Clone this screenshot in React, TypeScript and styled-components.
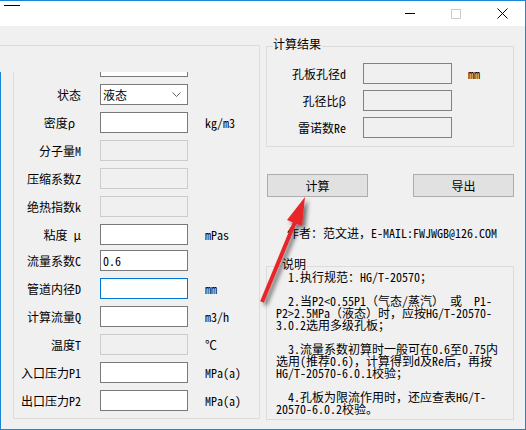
import React from 'react';
import styled, { createGlobalStyle } from 'styled-components';

const GlobalStyle = createGlobalStyle`
  html, body {
    margin: 0;
    padding: 0;
    background: #ffffff;
  }
  body {
    font-family: "Noto Sans Mono CJK SC", "Noto Sans CJK SC", monospace;
    font-size: 12px;
    color: #000;
  }
  * {
    box-sizing: border-box;
  }
`;

const FIELDS = [
  { label: '密度ρ ', kind: 'edit', unit: 'kg/m3' },
  { label: '分子量M', kind: 'disabled' },
  { label: '压缩系数Z', kind: 'disabled' },
  { label: '绝热指数k', kind: 'disabled' },
  { label: '粘度 μ', kind: 'edit', unit: 'mPas' },
  { label: '流量系数C', kind: 'edit', value: '0.6', pull: true },
  { label: '管道内径D', kind: 'focus', unit: 'mm' },
  { label: '计算流量Q', kind: 'edit', unit: 'm3/h' },
  { label: '温度T', kind: 'disabled', unit: '℃' },
  { label: '入口压力P1', kind: 'edit', unit: 'MPa(a)' },
  { label: '出口压力P2', kind: 'edit', unit: 'MPa(a)' },
];

const RESULTS = [
  { label: '孔板孔径d', unit: 'mm' },
  { label: '孔径比β' },
  { label: '雷诺数Re' },
];

const NOTES = [
  { text: '1.执行规范：HG/T-20570；', indent: true },
  { text: '' },
  { text: '2.当P2<0.55P1（气态/蒸汽） 或  P1-', indent: true },
  { text: 'P2>2.5MPa（液态）时，应按HG/T-20570-' },
  { text: '3.0.2选用多级孔板；' },
  { text: '' },
  { text: '3.流量系数初算时一般可在0.6至0.75内', indent: true },
  { text: '选用(推荐0.6)，计算得到d及Re后，再按' },
  { text: 'HG/T-20570-6.0.1校验；' },
  { text: '' },
  { text: '4.孔板为限流作用时，还应查表HG/T-', indent: true },
  { text: '20570-6.0.2校验。' },
];

export default function App() {
  return (
    <>
      <GlobalStyle />
      <Window>
        <TitleBar>
          <AppMark />
          <Captions>
            <CaptionButton>
              <MinGlyph />
            </CaptionButton>
            <CaptionButton>
              <MaxGlyph />
            </CaptionButton>
            <CaptionButton>
              <svg width="11" height="11" viewBox="0 0 11 11">
                <path d="M0.5 0.5 L10.5 10.5 M10.5 0.5 L0.5 10.5" stroke="#000" strokeWidth="1" />
              </svg>
            </CaptionButton>
          </Captions>
        </TitleBar>

        <Body>
          <LeftCol>
            <FrameTop />
            <Lower>
              <InputPanel>
                <FieldRow $first>
                  <FieldLabel />
                  <TextBox $kind="edit" />
                </FieldRow>
                <FieldRow>
                  <FieldLabel>状态</FieldLabel>
                  <Combo>
                    <span>液态</span>
                    <svg width="9" height="5" viewBox="0 0 9 5">
                      <path d="M0.5 0.5 L4.5 4.5 L8.5 0.5" fill="none" stroke="#606060" strokeWidth="1" />
                    </svg>
                  </Combo>
                </FieldRow>
                {FIELDS.map((f) => (
                  <FieldRow key={f.label} $pull={f.pull}>
                    <FieldLabel>{f.label}</FieldLabel>
                    <TextBox $kind={f.kind} defaultValue={f.value} readOnly={f.kind === 'disabled'} />
                    {f.unit && <Unit>{f.unit}</Unit>}
                  </FieldRow>
                ))}
              </InputPanel>
            </Lower>
          </LeftCol>

          <RightCol>
            <GroupBox>
              <GroupTitle>计算结果</GroupTitle>
              <ResultList>
                {RESULTS.map((r) => (
                  <ResultRow key={r.label}>
                    <ResultLabel>{r.label}</ResultLabel>
                    <ResultBox readOnly />
                    {r.unit && <ResultUnit>{r.unit}</ResultUnit>}
                  </ResultRow>
                ))}
              </ResultList>
            </GroupBox>

            <ButtonRow>
              <PushButton>计算</PushButton>
              <PushButton>导出</PushButton>
            </ButtonRow>

            <Author>作者：范文进，E-MAIL:FWJWGB@126.COM</Author>

            <NoteBox>
              <GroupTitle>说明</GroupTitle>
              <NoteText>
                {NOTES.map((n, i) => (
                  <NoteLine key={i} $indent={n.indent}>
                    {n.text}
                  </NoteLine>
                ))}
              </NoteText>
            </NoteBox>
          </RightCol>
        </Body>

        <ArrowLayer width="526" height="430" viewBox="0 0 526 430">
          <defs>
            <filter id="arrowShadow" x="-50%" y="-50%" width="200%" height="200%">
              <feDropShadow dx="3" dy="3" stdDeviation="2" floodColor="#000" floodOpacity="0.55" />
            </filter>
          </defs>
          <g filter="url(#arrowShadow)">
            <line x1="262" y1="302" x2="295" y2="222" stroke="#e8262b" strokeWidth="4" />
            <polygon points="305,197 302,226 287,220" fill="#e8262b" />
          </g>
        </ArrowLayer>
      </Window>
    </>
  );
}

const Window = styled.div`
  position: relative;
  width: 526px;
  height: 430px;
  display: flex;
  flex-direction: column;
  background: #f0f0f0;
  border-top: 1px solid #1a86d8;
  border-right: 1px solid #1a86d8;
  border-bottom: 1px solid #1a86d8;
  overflow: hidden;
`;

const TitleBar = styled.div`
  flex: none;
  height: 25px;
  display: flex;
  align-items: flex-start;
  background: #ffffff;
`;

const AppMark = styled.span`
  width: 16px;
  height: 1px;
  margin: 4px 0 0 4px;
  background: #000;
`;

const Captions = styled.div`
  margin-left: auto;
  display: flex;
`;

const CaptionButton = styled.div`
  width: 46px;
  height: 25px;
  display: flex;
  align-items: center;
  justify-content: center;
`;

const MinGlyph = styled.span`
  width: 10px;
  height: 1px;
  background: #000;
`;

const MaxGlyph = styled.span`
  width: 10px;
  height: 10px;
  border: 1px solid #cccccc;
`;

const Body = styled.div`
  flex: 1;
  min-height: 0;
  display: flex;
`;

const LeftCol = styled.div`
  width: 260px;
  flex: none;
  display: flex;
  flex-direction: column;
  padding-top: 19px;
`;

const FrameTop = styled.div`
  height: 27px;
  flex: none;
  border-top: 1px solid #dcdcdc;
  border-right: 1px solid #dcdcdc;
`;

const Lower = styled.div`
  flex: 1;
  display: flex;
  border-left: 1px solid #1a86d8;
  padding: 0 0 10px 12px;
`;

const InputPanel = styled.div`
  flex: 1;
  display: flex;
  flex-direction: column;
  gap: 7px;
  overflow: hidden;
  border-left: 1px solid #dcdcdc;
  border-right: 1px solid #dcdcdc;
  border-bottom: 1px solid #dcdcdc;
`;

const FieldRow = styled.div<{ $first?: boolean; $pull?: boolean }>`
  flex: none;
  height: 21px;
  display: flex;
  align-items: center;
  margin-top: ${(p) => (p.$first ? '-16px' : p.$pull ? '-2px' : '0')};
`;

const FieldLabel = styled.span`
  width: 67px;
  flex: none;
  text-align: right;
  white-space: pre;
  line-height: 21px;
`;

const TextBox = styled.input<{ $kind?: string }>`
  width: 88px;
  height: 21px;
  margin: 0 0 0 19px;
  padding: 0 2px;
  font: inherit;
  color: #000;
  outline: none;
  border: 1px solid
    ${(p) => (p.$kind === 'disabled' ? '#cccccc' : p.$kind === 'focus' ? '#0078d7' : '#7a7a7a')};
  background: ${(p) => (p.$kind === 'disabled' ? '#f0f0f0' : '#ffffff')};
`;

const Combo = styled.div`
  width: 88px;
  height: 21px;
  margin-left: 19px;
  padding: 0 6px 0 2px;
  display: flex;
  align-items: center;
  justify-content: space-between;
  border: 1px solid #7a7a7a;
  background: #ffffff;
`;

const Unit = styled.span`
  margin-left: 17px;
  white-space: nowrap;
`;

const RightCol = styled.div`
  flex: 1;
  display: flex;
  flex-direction: column;
  padding: 13px 11px 0 6px;
`;

const GroupBox = styled.fieldset`
  margin: 0;
  padding: 0 0 8px 0;
  min-width: 0;
  border: 1px solid #dcdcdc;
`;

const GroupTitle = styled.legend`
  position: relative;
  top: -2px;
  margin-left: 6px;
  padding: 0 1px 0 0;
  line-height: 14px;
`;

const ResultList = styled.div`
  margin-top: 10px;
  display: flex;
  flex-direction: column;
  gap: 6px;
`;

const ResultRow = styled.div`
  height: 21px;
  display: flex;
  align-items: center;
`;

const ResultLabel = styled.span`
  width: 79px;
  flex: none;
  text-align: right;
`;

const ResultBox = styled.input`
  width: 89px;
  height: 21px;
  margin: 0 0 0 17px;
  padding: 0 2px;
  font: inherit;
  outline: none;
  border: 1px solid #828282;
  background: #f0f0f0;
`;

const ResultUnit = styled.span`
  margin-left: 16px;
`;

const ButtonRow = styled.div`
  margin-top: 27px;
  padding-left: 1px;
  display: flex;
  justify-content: space-between;
`;

const PushButton = styled.button`
  width: 101px;
  height: 23px;
  padding: 0;
  font: inherit;
  font-size: 12px;
  color: #000;
  background: #e1e1e1;
  border: 1px solid #adadad;
  border-radius: 0;
`;

const Author = styled.div`
  margin-top: 29px;
  padding-left: 21px;
  line-height: 14px;
  white-space: nowrap;
`;

const NoteBox = styled(GroupBox)`
  margin-top: 19px;
  padding: 0 0 4px 9px;
`;

const NoteText = styled.div`
  margin-top: -2px;
`;

const NoteLine = styled.div<{ $indent?: boolean }>`
  height: 12px;
  line-height: 12px;
  white-space: pre;
  padding-left: ${(p) => (p.$indent ? '12px' : '0')};
`;

const ArrowLayer = styled.svg`
  position: absolute;
  top: -1px;
  left: 0;
  pointer-events: none;
`;
